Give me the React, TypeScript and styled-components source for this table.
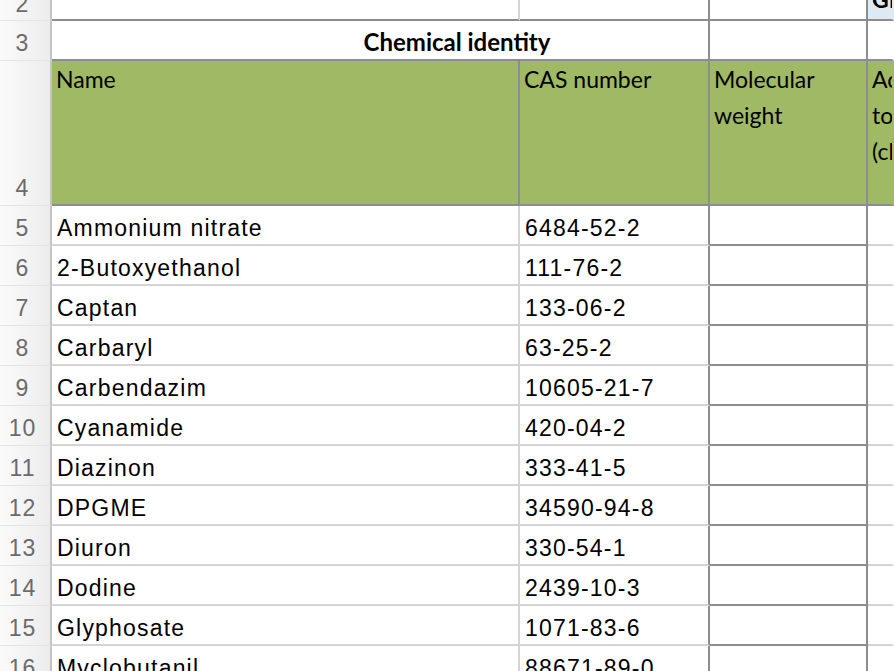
import * as React from 'react';
import styled, { createGlobalStyle, css } from 'styled-components';

const LIGHT = '#d4d4d4';
const DARK = '#8d8d8d';
const GREEN = '#a0b965';

type Line = 'light' | 'dark' | 'none';

const lineColor = (l?: Line) => (l === 'dark' ? DARK : l === 'none' ? 'transparent' : LIGHT);

const GlobalStyle = createGlobalStyle`
  html, body {
    margin: 0;
    padding: 0;
    background: #fff;
    overflow: hidden;
  }
`;

const Sheet = styled.div`
  display: grid;
  grid-template-columns: 52px 468px 190px 158px 1fr;
  grid-template-rows: 21px 40px 145px repeat(12, 40px);
  width: 894px;
  height: 671px;
  overflow: hidden;
`;

const RowHead = styled.div<{ $top?: boolean }>`
  display: flex;
  justify-content: center;
  align-items: ${(p) => (p.$top ? 'flex-start' : 'flex-end')};
  padding: 0 5px 5px 0;
  background: linear-gradient(to right, #fbfbfb, #ececec);
  border-right: 2px solid #c4c4c4;
  border-bottom: 1px solid #e4e4e4;
  font-family: 'Liberation Sans', Arial, sans-serif;
  font-size: 23px;
  letter-spacing: 1px;
  line-height: 1;
  color: #6b6b6b;
  overflow: hidden;
  ${(p) =>
    p.$top &&
    css`
      padding: 0 5px 0 0;
      line-height: 0.4;
    `}
`;

const Cell = styled.div<{ $right?: Line; $bottom?: Line; $bg?: string; $span?: number }>`
  box-sizing: border-box;
  display: flex;
  align-items: flex-end;
  min-width: 0;
  overflow: hidden;
  white-space: nowrap;
  background: ${(p) => p.$bg || '#fff'};
  border-right: 2px solid ${(p) => lineColor(p.$right)};
  border-bottom: 2px solid ${(p) => lineColor(p.$bottom)};
  ${(p) => p.$span && `grid-column: span ${p.$span};`}
`;

const DataText = styled.span`
  padding: 0 0 4px 5px;
  font-family: 'Liberation Sans', Arial, sans-serif;
  font-size: 23px;
  letter-spacing: 1.2px;
  line-height: 1;
  color: #000;
`;

const Title = styled.span`
  flex: 1;
  text-align: center;
  padding: 0 0 5px 154px;
  font-family: Lato, 'Open Sans', sans-serif;
  font-weight: 700;
  font-size: 24px;
  line-height: 1;
  color: #000;
`;

const SectionTag = styled.span`
  padding: 0 0 8px 4px;
  font-family: Lato, 'Open Sans', sans-serif;
  font-weight: 700;
  font-size: 23px;
  line-height: 1;
  color: #000;
`;

const HeadCell = styled(Cell)`
  align-items: flex-start;
  background: ${GREEN};
`;

const HeadText = styled.span`
  padding: 0 4px;
  font-family: Lato, 'Open Sans', sans-serif;
  font-size: 23px;
  line-height: 36px;
  white-space: pre-line;
  color: #000;
`;

const chemicals: [string, string][] = [
  ['Ammonium nitrate', '6484-52-2'],
  ['2-Butoxyethanol', '111-76-2'],
  ['Captan', '133-06-2'],
  ['Carbaryl', '63-25-2'],
  ['Carbendazim', '10605-21-7'],
  ['Cyanamide', '420-04-2'],
  ['Diazinon', '333-41-5'],
  ['DPGME', '34590-94-8'],
  ['Diuron', '330-54-1'],
  ['Dodine', '2439-10-3'],
  ['Glyphosate', '1071-83-6'],
  ['Myclobutanil', '88671-89-0'],
];

const App: React.FC = () => (
  <>
    <GlobalStyle />
    <Sheet>
      {/* row 2 */}
      <RowHead $top>2</RowHead>
      <Cell $right="light" $bottom="dark" />
      <Cell $right="dark" $bottom="dark" />
      <Cell $right="dark" $bottom="dark" />
      <Cell $right="none" $bottom="dark" $bg="#ddeaf4">
        <SectionTag>GHS classification</SectionTag>
      </Cell>

      {/* row 3 */}
      <RowHead>3</RowHead>
      <Cell $span={2} $right="dark" $bottom="dark">
        <Title>Chemical identity</Title>
      </Cell>
      <Cell $right="dark" $bottom="dark" />
      <Cell $right="none" $bottom="dark" />

      {/* row 4 */}
      <RowHead>4</RowHead>
      <HeadCell $right="dark" $bottom="dark">
        <HeadText>Name</HeadText>
      </HeadCell>
      <HeadCell $right="dark" $bottom="dark">
        <HeadText>CAS number</HeadText>
      </HeadCell>
      <HeadCell $right="dark" $bottom="dark">
        <HeadText>{'Molecular\nweight'}</HeadText>
      </HeadCell>
      <HeadCell $right="none" $bottom="dark">
        <HeadText>{'Acute\ntoxicity\n(classification)'}</HeadText>
      </HeadCell>

      {chemicals.map(([name, cas], i) => (
        <React.Fragment key={cas}>
          <RowHead>{i + 5}</RowHead>
          <Cell $right="light" $bottom="light">
            <DataText>{name}</DataText>
          </Cell>
          <Cell $right="dark" $bottom="light">
            <DataText>{cas}</DataText>
          </Cell>
          <Cell $right="dark" $bottom="dark" />
          <Cell $right="none" $bottom="light" />
        </React.Fragment>
      ))}
    </Sheet>
  </>
);

export default App;
